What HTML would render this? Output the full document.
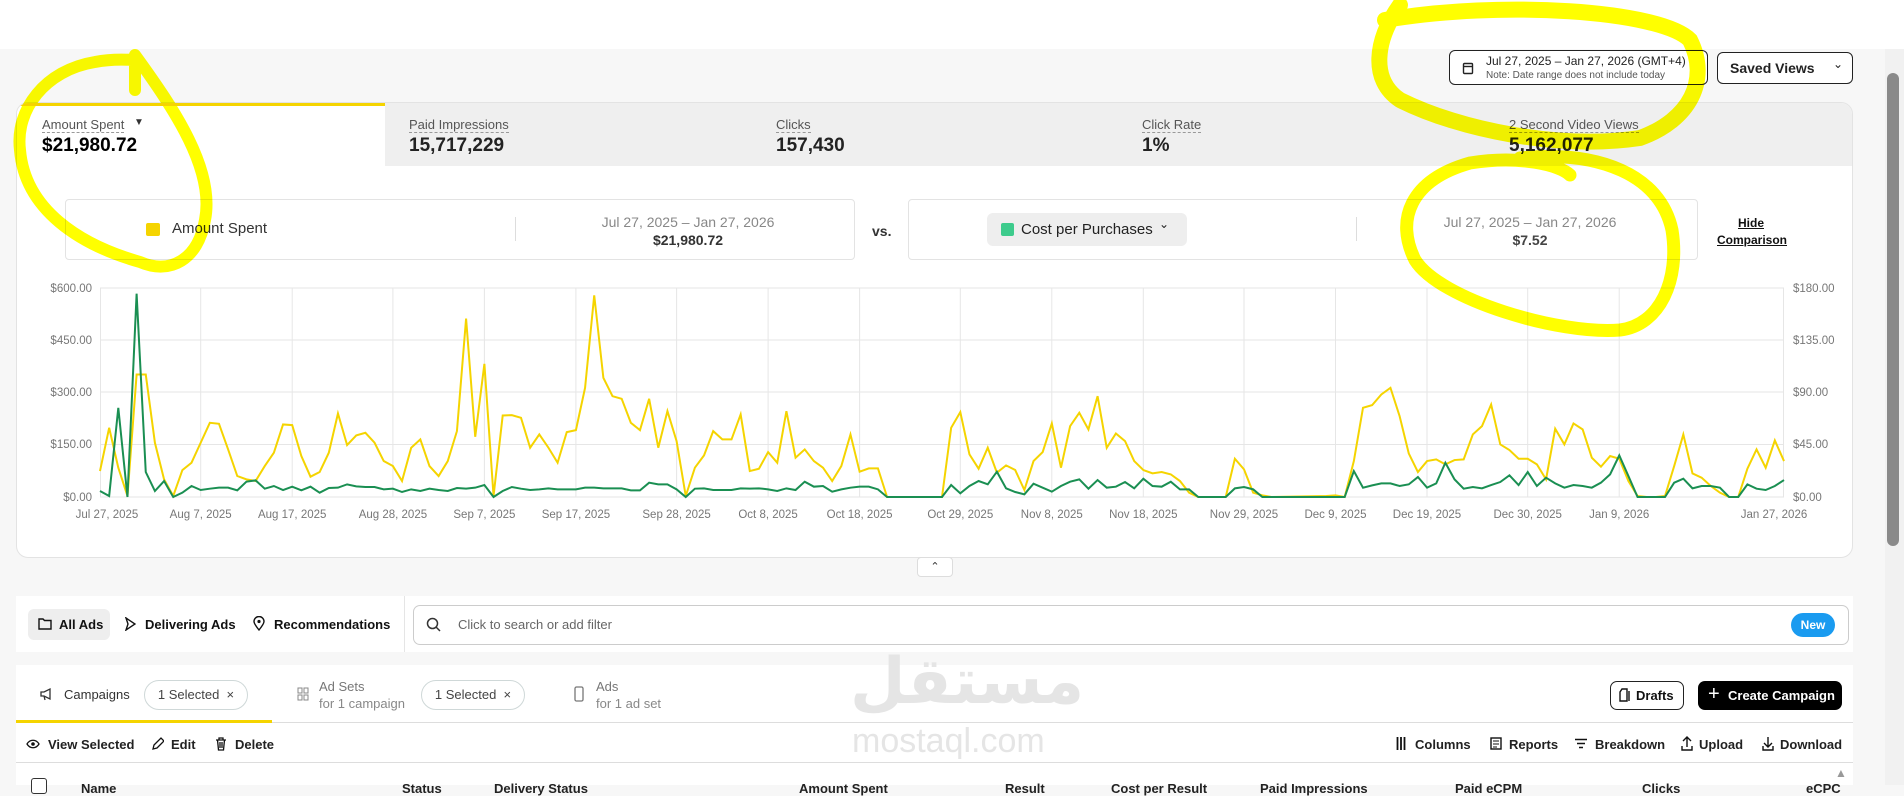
<!DOCTYPE html>
<html><head><meta charset="utf-8">
<style>
*{box-sizing:border-box;margin:0;padding:0}
body{width:1904px;height:785px;overflow:hidden;background:#f7f7f7;font-family:"Liberation Sans",Arial,sans-serif;color:#111;position:relative}
.a{position:absolute;white-space:nowrap}
.top{left:0;top:0;width:1904px;height:49px;background:#fff}
.btn{border:1px solid #222;border-radius:6px;background:#fff}
.card{left:16px;top:102px;width:1837px;height:456px;background:#fff;border:1px solid #e3e3e3;border-radius:12px;overflow:hidden}
.tabs{left:0;top:0;width:100%;height:63px;background:#efefef}
.tl{font-size:13px;color:#555;border-bottom:1px dashed #999;line-height:15px}
.tv{font-size:19px;font-weight:bold;color:#222}
.box{background:#fff;border:1px solid #e3e3e3;border-radius:4px}
.sm{font-size:13px}
.chip{border:1px solid #cfd8d8;border-radius:15px;font-size:13px;color:#444;text-align:center;line-height:28px}
.hd{font-size:13px;font-weight:bold;color:#222}
</style></head><body>
<div class="a top"></div>

<div class="a btn" style="left:1449px;top:50px;width:259px;height:35px"></div>
<svg class="a" style="left:1462px;top:61px" width="12" height="14" viewBox="0 0 12 14"><rect x="1.5" y="2.5" width="9" height="10" rx="1" fill="none" stroke="#222" stroke-width="1.4"/><line x1="1.5" y1="5.5" x2="10.5" y2="5.5" stroke="#222" stroke-width="1.4"/></svg>
<div class="a" style="left:1486px;top:54px;font-size:12px;color:#222">Jul 27, 2025 – Jan 27, 2026 (GMT+4)</div>
<div class="a" style="left:1486px;top:70px;font-size:10px;color:#555">Note: Date range does not include today</div>
<div class="a btn" style="left:1717px;top:52px;width:136px;height:32px"></div>
<div class="a" style="left:1730px;top:60px;font-size:14px;font-weight:bold;color:#222">Saved Views</div>
<div class="a" style="left:1833px;top:57px;font-size:12px;color:#222">&#8964;</div>

<div class="a" style="left:1885px;top:49px;width:19px;height:736px;background:#f1f1f1"></div>
<div class="a" style="left:1887px;top:73px;width:12px;height:473px;background:#8a8a8a;border-radius:6px"></div>

<div class="a card">
 <div class="a tabs"></div>
 <div class="a" style="left:0;top:0;width:368px;height:63px;background:#fff;border-top:3px solid #f5d400"></div>
 <div class="a tl" style="left:25px;top:14px">Amount Spent</div>
 <div class="a" style="left:117px;top:14px;font-size:10px;color:#333">&#9660;</div>
 <div class="a tv" style="left:25px;top:32px;color:#000">$21,980.72</div>
 <div class="a tl" style="left:392px;top:14px">Paid Impressions</div>
 <div class="a tv" style="left:392px;top:32px">15,717,229</div>
 <div class="a tl" style="left:759px;top:14px">Clicks</div>
 <div class="a tv" style="left:759px;top:32px">157,430</div>
 <div class="a tl" style="left:1125px;top:14px">Click Rate</div>
 <div class="a tv" style="left:1125px;top:32px">1%</div>
 <div class="a tl" style="left:1492px;top:14px">2 Second Video Views</div>
 <div class="a tv" style="left:1492px;top:32px">5,162,077</div>

 <div class="a box" style="left:48px;top:96px;width:790px;height:61px"></div>
 <div class="a" style="left:129px;top:120px;width:14px;height:13px;background:#f5d400;border-radius:2px"></div>
 <div class="a" style="left:155px;top:117px;font-size:15px;color:#333">Amount Spent</div>
 <div class="a" style="left:498px;top:114px;width:1px;height:24px;background:#ddd"></div>
 <div class="a" style="left:571px;top:111px;width:200px;text-align:center;font-size:14px;color:#888">Jul 27, 2025 – Jan 27, 2026</div>
 <div class="a" style="left:571px;top:129px;width:200px;text-align:center;font-size:14px;color:#333;font-weight:bold">$21,980.72</div>
 <div class="a" style="left:855px;top:120px;font-size:14px;font-weight:bold;color:#333">vs.</div>
 <div class="a box" style="left:891px;top:96px;width:790px;height:61px"></div>
 <div class="a" style="left:970px;top:110px;width:200px;height:33px;background:#eee;border-radius:6px"></div>
 <div class="a" style="left:984px;top:120px;width:13px;height:13px;background:#3dcb8c;border-radius:2px"></div>
 <div class="a" style="left:1004px;top:118px;font-size:15px;color:#222">Cost per Purchases</div>
 <div class="a" style="left:1142px;top:114px;font-size:12px;color:#222">&#8964;</div>
 <div class="a" style="left:1339px;top:114px;width:1px;height:24px;background:#ddd"></div>
 <div class="a" style="left:1413px;top:111px;width:200px;text-align:center;font-size:14px;color:#888">Jul 27, 2025 – Jan 27, 2026</div>
 <div class="a" style="left:1413px;top:129px;width:200px;text-align:center;font-size:14px;color:#444;font-weight:bold">$7.52</div>
 <div class="a" style="left:1700px;top:112px;width:68px;text-align:center;font-size:12px;color:#111;text-decoration:underline;line-height:17px;white-space:normal;font-weight:bold">Hide Comparison</div>
</div>

<svg class="a" style="left:0;top:280px" width="1904" height="250">
 <g stroke="#e6e6e6" stroke-width="1">
  <line x1="100" x2="1784" y1="8" y2="8"/><line x1="100" x2="1784" y1="60" y2="60"/><line x1="100" x2="1784" y1="112" y2="112"/><line x1="100" x2="1784" y1="164.5" y2="164.5"/><line x1="100" x2="1784" y1="217" y2="217"/>
  <line x1="100.5" x2="100.5" y1="8" y2="217"/><line x1="200.7" x2="200.7" y1="8" y2="217"/><line x1="292.2" x2="292.2" y1="8" y2="217"/><line x1="392.9" x2="392.9" y1="8" y2="217"/><line x1="484.4" x2="484.4" y1="8" y2="217"/><line x1="575.9" x2="575.9" y1="8" y2="217"/><line x1="676.6" x2="676.6" y1="8" y2="217"/><line x1="768.1" x2="768.1" y1="8" y2="217"/><line x1="859.6" x2="859.6" y1="8" y2="217"/><line x1="960.3" x2="960.3" y1="8" y2="217"/><line x1="1051.8" x2="1051.8" y1="8" y2="217"/><line x1="1143.3" x2="1143.3" y1="8" y2="217"/><line x1="1244" x2="1244" y1="8" y2="217"/><line x1="1335.5" x2="1335.5" y1="8" y2="217"/><line x1="1427" x2="1427" y1="8" y2="217"/><line x1="1527.7" x2="1527.7" y1="8" y2="217"/><line x1="1619.2" x2="1619.2" y1="8" y2="217"/><line x1="1783.5" x2="1783.5" y1="8" y2="217"/>
 </g>
 <g font-family="Liberation Sans, sans-serif" font-size="11.5" fill="#777">
  <text x="92" y="12" text-anchor="end">$600.00</text><text x="92" y="64" text-anchor="end">$450.00</text><text x="92" y="116" text-anchor="end">$300.00</text><text x="92" y="168" text-anchor="end">$150.00</text><text x="92" y="221" text-anchor="end">$0.00</text>
  <text x="1793" y="12">$180.00</text><text x="1793" y="64">$135.00</text><text x="1793" y="116">$90.00</text><text x="1793" y="168">$45.00</text><text x="1793" y="221">$0.00</text>
  <g text-anchor="middle">
  <text x="107" y="238">Jul 27, 2025</text><text x="200.7" y="238">Aug 7, 2025</text><text x="292.2" y="238">Aug 17, 2025</text><text x="392.9" y="238">Aug 28, 2025</text><text x="484.4" y="238">Sep 7, 2025</text><text x="575.9" y="238">Sep 17, 2025</text><text x="676.6" y="238">Sep 28, 2025</text><text x="768.1" y="238">Oct 8, 2025</text><text x="859.6" y="238">Oct 18, 2025</text><text x="960.3" y="238">Oct 29, 2025</text><text x="1051.8" y="238">Nov 8, 2025</text><text x="1143.3" y="238">Nov 18, 2025</text><text x="1244" y="238">Nov 29, 2025</text><text x="1335.5" y="238">Dec 9, 2025</text><text x="1427" y="238">Dec 19, 2025</text><text x="1527.7" y="238">Dec 30, 2025</text><text x="1619.2" y="238">Jan 9, 2026</text><text x="1774" y="238">Jan 27, 2026</text>
  </g>
 </g>
 <svg x="100" y="8" width="1684" height="209" viewBox="0 25 2944 628" preserveAspectRatio="none" overflow="visible">
  <polyline fill="none" stroke="#f5d400" stroke-width="2" vector-effect="non-scaling-stroke" points="0,575 16,445 32,565 48,650 64,285 80,285 96,490 112,600 128,650 144,572 160,550 176,490 192,430 208,433 224,510 240,590 256,600 272,605 288,560 304,520 320,435 336,437 352,530 368,592 384,578 400,520 416,402 432,497 448,468 464,460 480,490 496,545 512,560 528,605 544,505 560,480 576,560 592,590 608,545 624,455 640,117 656,472 672,253 688,650 704,408 720,407 736,415 752,505 768,465 784,505 800,550 816,458 832,452 848,325 864,47 880,295 896,350 912,358 928,430 944,452 960,358 976,505 992,395 1008,485 1024,650 1040,565 1056,528 1072,455 1088,480 1104,480 1120,405 1136,575 1152,568 1168,518 1184,550 1200,395 1216,535 1232,510 1248,545 1264,565 1280,605 1296,560 1312,465 1328,577 1344,567 1360,567 1376,653 1472,653 1488,445 1504,398 1520,525 1536,568 1552,505 1568,580 1584,558 1600,572 1616,632 1632,545 1648,518 1664,432 1680,565 1696,440 1712,400 1728,450 1744,350 1760,505 1776,462 1792,485 1808,545 1824,572 1840,582 1856,578 1872,585 1888,605 1904,640 1920,653 1968,653 1984,538 2000,570 2016,640 2032,648 2048,653 2144,650 2160,648 2176,653 2192,545 2208,385 2224,377 2240,345 2256,325 2272,410 2288,522 2304,578 2320,545 2336,540 2352,555 2368,542 2384,540 2400,465 2416,440 2432,375 2448,495 2464,512 2480,538 2496,538 2512,555 2528,600 2544,448 2560,495 2576,432 2592,450 2608,535 2624,562 2640,530 2656,538 2672,605 2688,650 2704,653 2720,653 2736,650 2752,560 2768,465 2784,582 2800,595 2816,620 2832,640 2848,653 2864,653 2880,568 2896,510 2912,565 2928,483 2944,545"/>
  <polyline fill="none" stroke="#1a8f52" stroke-width="2" vector-effect="non-scaling-stroke" points="0,635 16,650 32,385 48,653 64,42 80,578 96,635 112,605 128,653 144,640 160,620 176,632 192,628 208,625 224,625 240,633 256,607 272,603 288,628 304,620 320,632 336,622 352,633 368,622 384,640 400,626 416,625 432,615 448,621 464,623 480,623 496,630 512,628 528,638 544,630 560,635 576,628 592,632 608,635 624,626 640,628 656,625 672,617 688,653 704,635 720,623 736,628 752,632 768,630 784,627 800,630 816,630 832,630 848,625 864,625 880,627 896,627 912,627 928,633 944,633 960,610 976,615 992,615 1008,630 1024,653 1040,628 1056,627 1072,632 1088,632 1104,632 1120,627 1136,628 1152,627 1168,630 1184,635 1200,627 1216,632 1232,607 1248,622 1264,620 1280,637 1296,630 1312,625 1328,622 1344,622 1360,630 1376,653 1472,653 1488,617 1504,642 1520,620 1536,605 1552,615 1568,577 1584,627 1600,638 1616,645 1632,613 1648,625 1664,637 1680,620 1696,607 1712,600 1728,628 1744,602 1760,625 1776,622 1792,608 1808,627 1824,598 1840,620 1856,622 1872,607 1888,630 1904,630 1920,653 1968,653 1984,627 2000,623 2016,630 2032,653 2176,653 2192,575 2208,625 2224,618 2240,612 2256,612 2272,620 2288,615 2304,593 2320,625 2336,612 2352,550 2368,600 2384,628 2400,623 2416,627 2432,617 2448,608 2464,588 2480,617 2496,578 2512,620 2528,595 2544,612 2560,625 2576,617 2592,620 2608,625 2624,610 2640,585 2656,528 2672,590 2688,653 2736,653 2752,610 2768,598 2784,627 2800,620 2816,620 2832,625 2848,653 2864,653 2880,615 2896,628 2912,632 2928,620 2944,602"/>
 </svg>
</svg>

<div class="a" style="left:917px;top:557px;width:36px;height:20px;background:#fff;border:1px solid #ddd;border-radius:4px;text-align:center;font-size:11px;line-height:18px;color:#333">&#8963;</div>

<div class="a" style="left:16px;top:596px;width:1837px;height:56px;background:#fff"></div>
<div class="a" style="left:28px;top:609px;width:82px;height:31px;background:#eee;border-radius:6px"></div>
<svg class="a" style="left:38px;top:618px" width="14" height="12" viewBox="0 0 14 12"><path d="M1 1h4l1.5 1.5H13V11H1z" fill="none" stroke="#111" stroke-width="1.4"/></svg>
<div class="a sm" style="left:59px;top:617px;font-weight:bold">All Ads</div>
<svg class="a" style="left:124px;top:617px" width="12" height="14" viewBox="0 0 12 14"><path d="M2 1l9 6-9 6 2-6z" fill="none" stroke="#111" stroke-width="1.4"/></svg>
<div class="a sm" style="left:145px;top:617px;font-weight:bold">Delivering Ads</div>
<svg class="a" style="left:253px;top:616px" width="12" height="15" viewBox="0 0 12 15"><path d="M6 14C2 9 1 7 1 5.5a5 5 0 0110 0C11 7 10 9 6 14z" fill="none" stroke="#111" stroke-width="1.4"/><circle cx="6" cy="5.5" r="1.6" fill="#111"/></svg>
<div class="a sm" style="left:274px;top:617px;font-weight:bold">Recommendations</div>
<div class="a" style="left:404px;top:596px;width:1px;height:56px;background:#e5e5e5"></div>
<div class="a" style="left:413px;top:605px;width:1436px;height:40px;background:#fff;border:1px solid #ccc;border-radius:7px"></div>
<svg class="a" style="left:426px;top:617px" width="15" height="15" viewBox="0 0 15 15"><circle cx="6.5" cy="6.5" r="5" fill="none" stroke="#333" stroke-width="1.5"/><path d="M10 10l4 4" stroke="#333" stroke-width="1.5"/></svg>
<div class="a sm" style="left:458px;top:617px;color:#666">Click to search or add filter</div>
<div class="a" style="left:1791px;top:613px;width:44px;height:24px;background:#1a9bf0;border-radius:12px;color:#fff;font-size:12px;font-weight:bold;text-align:center;line-height:24px">New</div>

<div class="a" style="left:16px;top:665px;width:1837px;height:120px;background:#fff"></div>
<div class="a" style="left:16px;top:722px;width:1837px;height:1px;background:#ddd"></div>
<div class="a" style="left:16px;top:720px;width:256px;height:3px;background:#f5d400"></div>
<svg class="a" style="left:40px;top:687px" width="14" height="14" viewBox="0 0 14 14"><path d="M1 5h3l6-3v10l-6-3H1zM4 9l1 4" fill="none" stroke="#333" stroke-width="1.3"/></svg>
<div class="a sm" style="left:64px;top:687px;color:#333">Campaigns</div>
<div class="a chip" style="left:144px;top:680px;width:104px;height:30px">1 Selected &nbsp;×</div>
<svg class="a" style="left:297px;top:687px" width="12" height="14" viewBox="0 0 12 14"><g fill="none" stroke="#888"><rect x="1" y="1" width="4" height="5"/><rect x="7" y="1" width="4" height="5"/><rect x="1" y="8" width="4" height="5"/><rect x="7" y="8" width="4" height="5"/></g></svg>
<div class="a sm" style="left:319px;top:679px;color:#777">Ad Sets</div>
<div class="a sm" style="left:319px;top:696px;color:#888">for 1 campaign</div>
<div class="a chip" style="left:421px;top:680px;width:104px;height:30px">1 Selected &nbsp;×</div>
<svg class="a" style="left:574px;top:686px" width="10" height="16" viewBox="0 0 10 16"><rect x="1" y="1" width="8" height="14" rx="1.5" fill="none" stroke="#777" stroke-width="1.3"/></svg>
<div class="a sm" style="left:596px;top:679px;color:#777">Ads</div>
<div class="a sm" style="left:596px;top:696px;color:#888">for 1 ad set</div>

<div class="a" style="left:850px;top:645px;font-family:'DejaVu Sans',sans-serif;font-size:64px;font-weight:bold;color:#e5e5e5;direction:rtl">مستقل</div>
<div class="a" style="left:852px;top:722px;font-size:34px;color:#e5e5e5">mostaql.com</div>

<div class="a" style="left:1610px;top:681px;width:74px;height:29px;border:1px solid #222;border-radius:7px;background:#fff"></div>
<svg class="a" style="left:1619px;top:688px" width="12" height="14" viewBox="0 0 12 14"><path d="M3 1h5v12H1V4z M10 3v10" fill="none" stroke="#111" stroke-width="1.4"/></svg>
<div class="a sm" style="left:1636px;top:688px;font-weight:bold">Drafts</div>
<div class="a" style="left:1698px;top:681px;width:144px;height:29px;background:#000;border-radius:7px"></div>
<div class="a" style="left:1708px;top:682px;color:#fff;font-size:20px;line-height:24px">+</div>
<div class="a sm" style="left:1728px;top:688px;color:#fff;font-weight:bold">Create Campaign</div>

<svg class="a" style="left:26px;top:739px" width="14" height="10" viewBox="0 0 14 10"><path d="M1 5c3-5 9-5 12 0-3 5-9 5-12 0z" fill="none" stroke="#111" stroke-width="1.3"/><circle cx="7" cy="5" r="1.8" fill="#111"/></svg>
<div class="a hd" style="left:48px;top:737px">View Selected</div>
<svg class="a" style="left:151px;top:737px" width="13" height="14" viewBox="0 0 13 14"><path d="M2 12l1-4 7-7 3 3-7 7z" fill="none" stroke="#111" stroke-width="1.3"/></svg>
<div class="a hd" style="left:171px;top:737px">Edit</div>
<svg class="a" style="left:215px;top:737px" width="12" height="14" viewBox="0 0 12 14"><path d="M1 3h10M4 3V1h4v2M2.5 3l1 10h5l1-10M5 5v6M7 5v6" fill="none" stroke="#111" stroke-width="1.3"/></svg>
<div class="a hd" style="left:235px;top:737px">Delete</div>
<div class="a" style="left:16px;top:762px;width:1837px;height:1px;background:#ddd"></div>
<svg class="a" style="left:1396px;top:737px" width="10" height="13"><path d="M1.5 0v13M5 0v13M8.5 0v13" stroke="#111" stroke-width="1.8"/></svg>
<div class="a hd" style="left:1415px;top:737px">Columns</div>
<svg class="a" style="left:1490px;top:737px" width="12" height="13" viewBox="0 0 12 13"><rect x="1" y="1" width="10" height="11" fill="none" stroke="#111" stroke-width="1.4"/><path d="M3 4h6M3 7h6M3 10h4" stroke="#111"/></svg>
<div class="a hd" style="left:1509px;top:737px">Reports</div>
<svg class="a" style="left:1575px;top:738px" width="12" height="11"><path d="M0 1.5h12M2 5.5h8M4 9.5h4" stroke="#111" stroke-width="1.5"/></svg>
<div class="a hd" style="left:1595px;top:737px">Breakdown</div>
<svg class="a" style="left:1681px;top:736px" width="12" height="15"><path d="M6 11V1M2 5l4-4 4 4M1 10v4h10v-4" fill="none" stroke="#111" stroke-width="1.4"/></svg>
<div class="a hd" style="left:1699px;top:737px">Upload</div>
<svg class="a" style="left:1762px;top:736px" width="12" height="15"><path d="M6 1v10M2 7l4 4 4-4M1 10v4h10v-4" fill="none" stroke="#111" stroke-width="1.4"/></svg>
<div class="a hd" style="left:1780px;top:737px">Download</div>

<div class="a" style="left:31px;top:778px;width:16px;height:16px;border:1.5px solid #333;border-radius:3px;background:#fff"></div>
<div class="a hd" style="left:81px;top:781px">Name</div>
<div class="a hd" style="left:402px;top:781px">Status</div>
<div class="a hd" style="left:494px;top:781px">Delivery Status</div>
<div class="a hd" style="left:799px;top:781px">Amount Spent</div>
<div class="a hd" style="left:1005px;top:781px">Result</div>
<div class="a hd" style="left:1111px;top:781px">Cost per Result</div>
<div class="a hd" style="left:1260px;top:781px">Paid Impressions</div>
<div class="a hd" style="left:1455px;top:781px">Paid eCPM</div>
<div class="a hd" style="left:1642px;top:781px">Clicks</div>
<div class="a hd" style="left:1806px;top:781px">eCPC</div>
<div class="a" style="left:1835px;top:766px;font-size:12px;color:#999">&#9650;</div>

<svg class="a" style="left:0;top:0;mix-blend-mode:multiply" width="1904" height="785">
 <g fill="none" stroke="#ffff00" stroke-linecap="round">
  <path d="M135 55 C175 110 215 170 205 220 C198 260 170 275 140 262 C80 245 25 210 20 150 C15 110 45 70 95 62 C115 58 130 60 135 60 L135 90" stroke-width="12"/>
  <path d="M1385 20 C1500 0 1660 10 1690 40 C1710 80 1690 120 1640 138 C1560 150 1460 130 1400 100 C1370 80 1375 40 1400 5" stroke-width="16"/>
  <path d="M1520 158 C1600 150 1660 175 1672 230 C1680 280 1660 325 1620 330 C1560 335 1440 300 1415 260 C1395 220 1410 180 1470 163 C1520 155 1560 165 1570 175" stroke-width="13"/>
 </g>
</svg>
</body></html>
